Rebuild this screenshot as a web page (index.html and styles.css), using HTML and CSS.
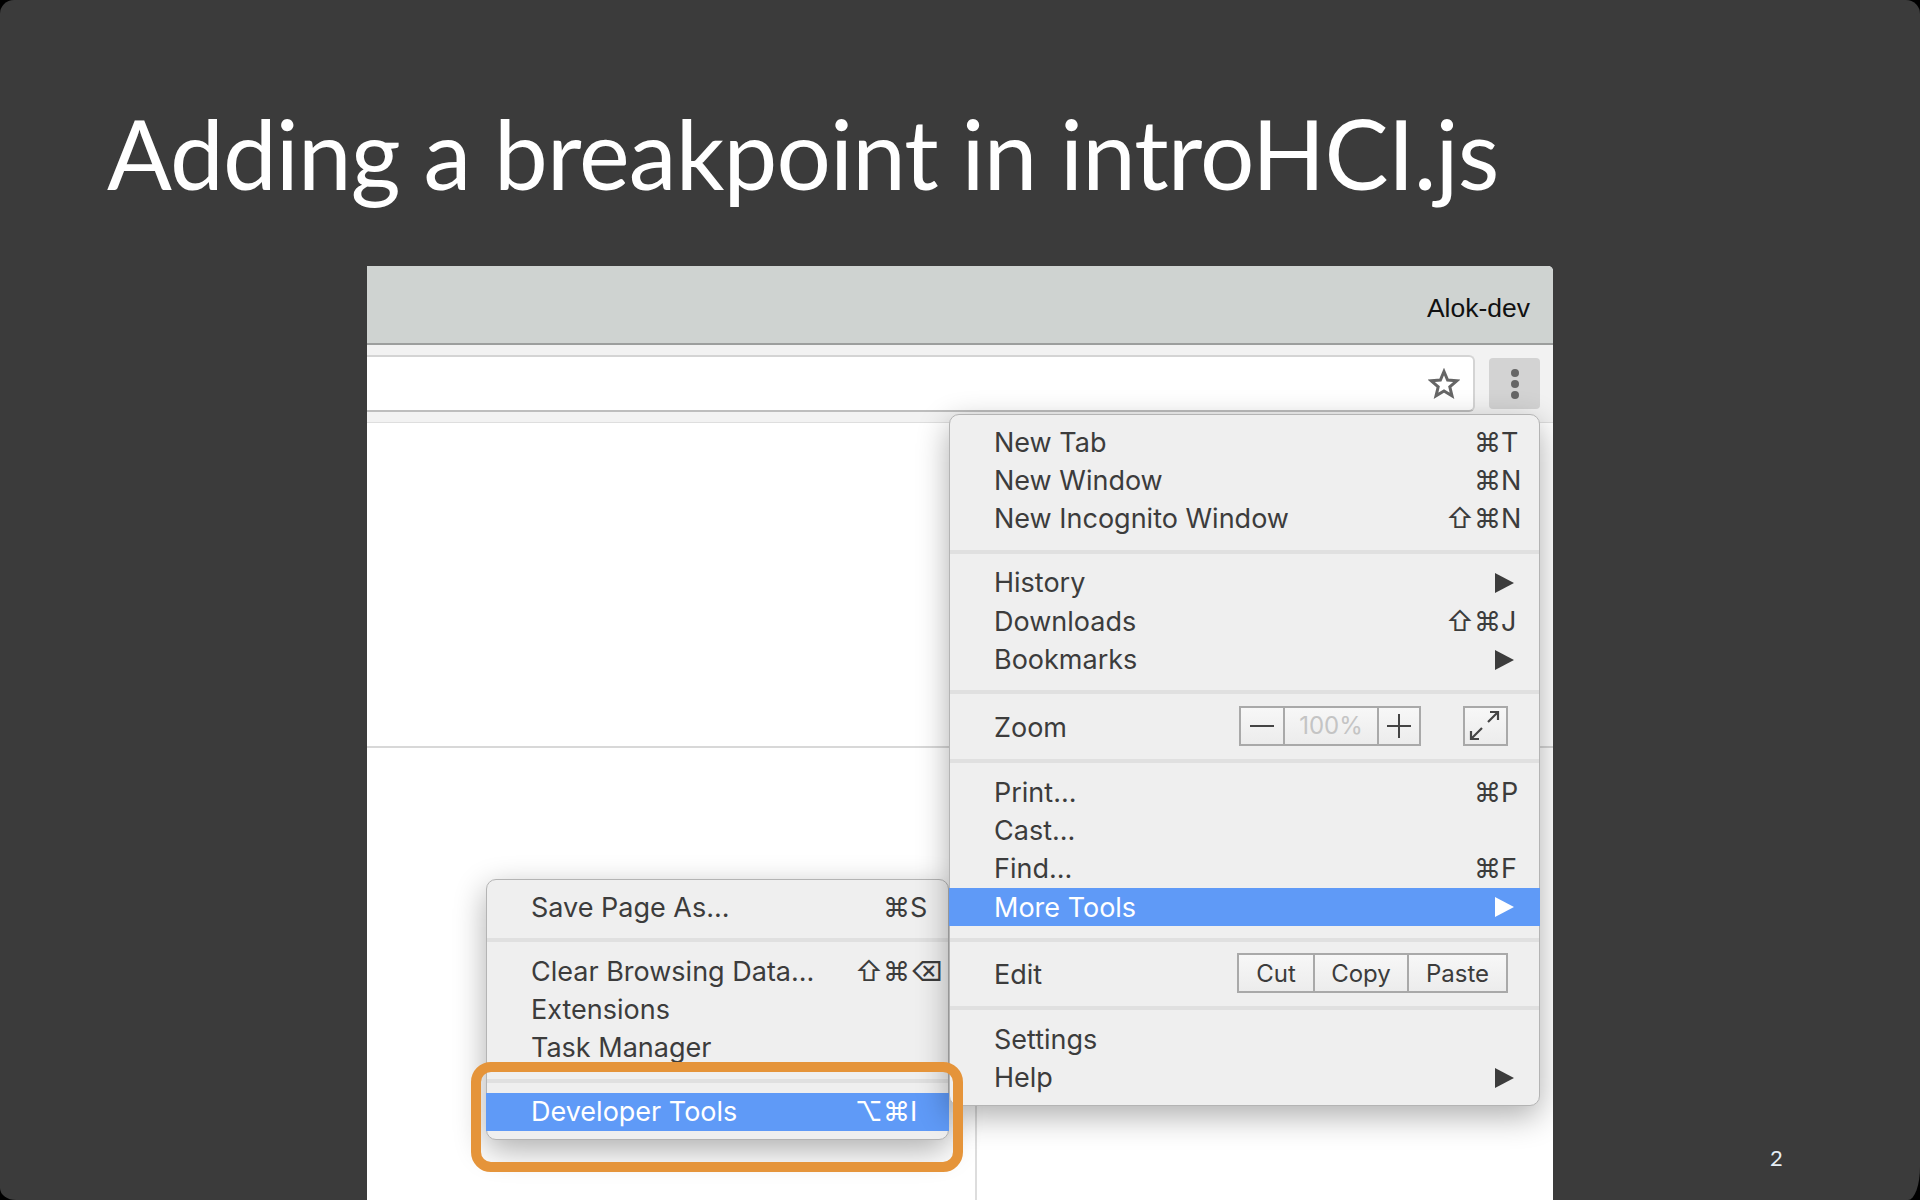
FILE: index.html
```html
<html>
    <head>
        <title>Adding a breakpoint</title>
        <link rel="stylesheet" href="styles.css">
    </head>

    <body>
        <div class="slide">
            <header class="slide-head">
                <h1>Adding a breakpoint in introHCI.js</h1>
            </header>

            <div class="shot">
                <div class="titlebar">
                    <span class="profile">Alok-dev</span>
                </div>

                <div class="toolbar">
                    <div class="urlbox">
                        <svg class="star" width="32" height="32" viewBox="0 0 32 32">
                            <path d="M16 3.5l3.6 8.6 9.2.7-7 6 2.2 9-8-4.8-8 4.8 2.2-9-7-6 9.2-.7z" fill="none" stroke="#666" stroke-width="3" stroke-linejoin="miter"/>
                        </svg>
                    </div>
                    <div class="menubtn">
                        <i></i><i></i><i></i>
                    </div>
                </div>

                <div class="page">
                    <div class="page-head"></div>
                    <div class="page-body"></div>
                </div>

                <!-- submenu -->
                <div class="menu submenu">
                    <div class="row"><span>Save Page As...</span><span class="keys"><b></b>⌘S</span></div>
                    <div class="sep"></div>
                    <div class="row"><span>Clear Browsing Data...</span><span class="keys"><b>⇧</b>⌘⌫</span></div>
                    <div class="row"><span>Extensions</span></div>
                    <div class="row"><span>Task Manager</span></div>
                    <div class="sep"></div>
                    <div class="row active"><span>Developer Tools</span><span class="keys"><b>⌥</b>⌘I</span></div>
                </div>

                <!-- main chrome menu -->
                <div class="menu mainmenu">
                    <div class="row"><span>New Tab</span><span class="keys"><b></b>⌘T</span></div>
                    <div class="row"><span>New Window</span><span class="keys"><b></b>⌘N</span></div>
                    <div class="row"><span>New Incognito Window</span><span class="keys"><b>⇧</b>⌘N</span></div>
                    <div class="sep"></div>
                    <div class="row"><span>History</span><i class="arrow"></i></div>
                    <div class="row"><span>Downloads</span><span class="keys"><b>⇧</b>⌘J</span></div>
                    <div class="row"><span>Bookmarks</span><i class="arrow"></i></div>
                    <div class="sep"></div>
                    <div class="row wide">
                        <span>Zoom</span>
                        <div class="controls">
                            <div class="btns">
                                <div class="btn zoom-side">
                                    <svg width="26" height="26" viewBox="0 0 26 26"><path d="M1 13h24" stroke="#444" stroke-width="2"/></svg>
                                </div>
                                <div class="btn zoom-value">100%</div>
                                <div class="btn zoom-side">
                                    <svg width="26" height="26" viewBox="0 0 26 26"><path d="M1 13h24M13 1v24" stroke="#444" stroke-width="2"/></svg>
                                </div>
                            </div>
                            <div class="btns">
                                <div class="btn fullscreen">
                                    <svg width="41" height="36" viewBox="0 0 41 36">
                                        <path d="M23 14L33 4M25 4h8v8M6 31L17 20M6 23v8h8" fill="none" stroke="#444" stroke-width="2.2"/>
                                    </svg>
                                </div>
                            </div>
                        </div>
                    </div>
                    <div class="sep"></div>
                    <div class="row"><span>Print...</span><span class="keys"><b></b>⌘P</span></div>
                    <div class="row"><span>Cast...</span></div>
                    <div class="row"><span>Find...</span><span class="keys"><b></b>⌘F</span></div>
                    <div class="row active"><span>More Tools</span><i class="arrow"></i></div>
                    <div class="sep"></div>
                    <div class="row wide">
                        <span>Edit</span>
                        <div class="controls">
                            <div class="btns">
                                <div class="btn edit-cut">Cut</div>
                                <div class="btn edit-copy">Copy</div>
                                <div class="btn edit-paste">Paste</div>
                            </div>
                        </div>
                    </div>
                    <div class="sep"></div>
                    <div class="row"><span>Settings</span></div>
                    <div class="row"><span>Help</span><i class="arrow"></i></div>
                </div>

                <!-- orange highlight -->
                <div class="highlight"></div>
            </div>

            <span class="pagenum">2</span>
        </div>
    </body>
</html>
```

FILE: styles.css
```css
/* Page and slide */
body {
    margin: 0;
    background-color: #000;
}

.slide {
    position: relative;
    width: 1920px;
    height: 1200px;
    overflow: hidden;
    background-color: #3b3b3b;
    border-radius: 14px 14px 12px 16px / 14px 14px 33px 12px;
}

.slide-head {
    height: 266px;
    padding-left: 107px;
    box-sizing: border-box;
}

h1 {
    margin: 0;
    padding-top: 105px;
    font-family: "Lato", sans-serif;
    font-weight: 400;
    font-size: 96px;
    line-height: 1;
    letter-spacing: -0.87px;
    color: #fff;
    white-space: nowrap;
}

.pagenum {
    position: absolute;
    left: 1770px;
    top: 1144px;
    font-family: "Lato", sans-serif;
    font-size: 22px;
    color: #e4eef6;
}

/* Browser screenshot */
.shot {
    position: relative;
    width: 1186px;
    height: 934px;
    margin-left: 367px;
    overflow: hidden;
    background-color: #fff;
    border-top-right-radius: 5px;
    font-family: "Inter", "DejaVu Sans", sans-serif;
}

.titlebar {
    display: flex;
    align-items: center;
    justify-content: flex-end;
    height: 79px;
    padding: 8px 23px 0 0;
    box-sizing: border-box;
    background-color: #cfd3d1;
    border-bottom: 2px solid #9c9e9d;
}

.profile {
    font-family: "Liberation Sans", sans-serif;
    font-size: 26.5px;
    color: #111;
}

.toolbar {
    display: flex;
    height: 78px;
    box-sizing: border-box;
    padding: 10px 13px 0 0;
    background-color: #f2f2f2;
    border-bottom: 1px solid #dedede;
}

.urlbox {
    display: flex;
    align-items: center;
    justify-content: flex-end;
    flex: 1;
    height: 57px;
    box-sizing: border-box;
    padding-right: 13px;
    background-color: #fff;
    border: 2px solid #d4d4d4;
    border-left: none;
    border-bottom-color: #bdbdbd;
    border-radius: 0 6px 6px 0;
}

.menubtn {
    display: flex;
    flex-direction: column;
    align-items: center;
    justify-content: center;
    gap: 3px;
    width: 51px;
    height: 51px;
    margin: 3px 0 0 14px;
    background-color: #d3d3d3;
    border-radius: 4px;
}

.menubtn i {
    width: 8px;
    height: 8px;
    border-radius: 50%;
    background-color: #666;
}

.page-head {
    height: 323px;
    border-bottom: 2px solid #d8d8d8;
}

.page-body {
    width: 608px;
    height: 460px;
    border-right: 2px solid #ddd;
}

/* Menus */
.menu {
    position: absolute;
    box-sizing: border-box;
    padding: 8px 0;
    background-color: #efefef;
    border: 1px solid #b4b4b4;
    border-radius: 10px;
    box-shadow: 0 10px 32px rgba(0, 0, 0, 0.32);
    font-size: 27px;
    color: #3c3c3c;
}

.mainmenu {
    left: 582px;
    top: 148px;
    width: 591px;
    height: 692px;
}

.submenu {
    left: 119px;
    top: 613px;
    width: 463px;
    height: 261px;
}

.row {
    display: flex;
    align-items: center;
    justify-content: space-between;
    height: 38.4px;
    padding: 0 25px 0 44px;
}

.row.wide {
    height: 43px;
}

.row.wide > span {
    margin-top: 3px;
}

/* highlighted row runs over the menu border */
.row.active {
    margin: 0 -1px;
    padding: 0 26px 0 45px;
    background-color: #5f9af7;
    color: #fff;
}

.sep {
    height: 4px;
    margin: 11.5px 0 10px;
    background-color: #e0e0e0;
}

/* Keyboard shortcuts, the command key lines up in every row */
.keys {
    display: flex;
    width: 68px;
    white-space: nowrap;
}

.keys b {
    width: 28px;
    flex-shrink: 0;
    font-weight: 400;
}

.arrow {
    width: 0;
    height: 0;
    border-left: 19px solid #3c3c3c;
    border-top: 10px solid transparent;
    border-bottom: 10px solid transparent;
}

.active .arrow {
    border-left-color: #fff;
}

/* Zoom and edit buttons */
.controls {
    display: flex;
    gap: 42px;
    margin: 0 6px 0 0;
}

.btns {
    display: flex;
    height: 40px;
    box-sizing: border-box;
    border: 2px solid #a9a9a9;
}

.btn {
    display: flex;
    align-items: center;
    justify-content: center;
    box-sizing: border-box;
    background-image: linear-gradient(#f7f7f7, #ececec);
    border-left: 2px solid #a9a9a9;
    font-size: 24px;
}

.btn:first-child {
    border-left: none;
}

.zoom-side {
    width: 42px;
}

.zoom-value {
    width: 94px;
    color: #c4c4c4;
}

.fullscreen {
    width: 41px;
}

.edit-cut {
    width: 74px;
}

.edit-copy {
    width: 94px;
}

.edit-paste {
    width: 99px;
}

.highlight {
    position: absolute;
    left: 104px;
    top: 796px;
    width: 492px;
    height: 110px;
    box-sizing: border-box;
    border: 10px solid #e5943a;
    border-radius: 20px;
}
```
